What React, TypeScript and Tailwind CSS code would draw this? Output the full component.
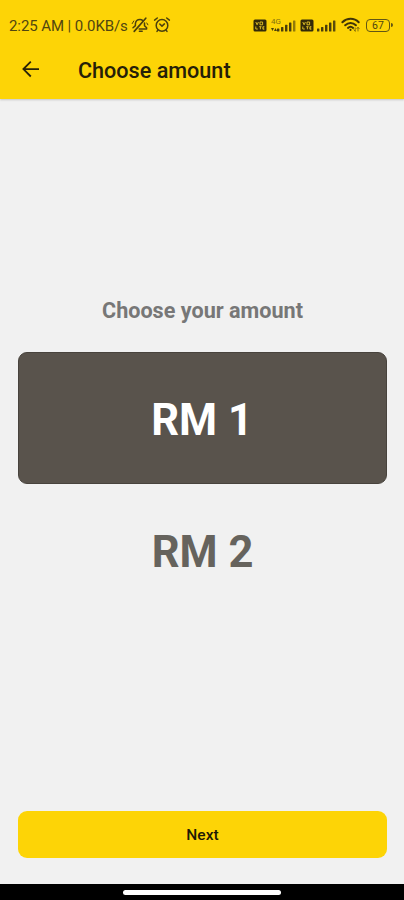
function BellOff() {
  return (
    <svg className="h-[18px] w-[18px] shrink-0" viewBox="0 0 18 18" fill="none" stroke="#4b400d" strokeWidth="1.5" strokeLinecap="round" strokeLinejoin="round">
      <path d="M2 11.8L4.4 9.6V7.6C4.7 4.9 6.8 3.5 9 3.5C10 3.5 10.9 3.8 11.6 4.3M13.5 7V9.8L15.6 11.8V13H8.2M8.4 15.2H11.2" />
      <path d="M14.8 2.2L3.2 15.4" strokeWidth="1.7" />
      <path d="M1.2 7.6L2.8 5M15.8 7L16.9 8.8" strokeWidth="1" />
    </svg>
  );
}

function AlarmClock() {
  return (
    <svg className="h-[18px] w-[18px] shrink-0" viewBox="0 0 18 18" fill="none" stroke="#4b400d" strokeWidth="1.5" strokeLinecap="round" strokeLinejoin="round">
      <circle cx="9" cy="9.4" r="5.8" />
      <path d="M6.8 8L9 10.1L11.4 7.9M1.6 4.1L4.3 2M16.4 4.1L13.7 2M5 14L4 15.4M13 14L14 15.4" />
    </svg>
  );
}

function VolteBadge() {
  return (
    <svg className="h-[13px] w-[14px] shrink-0" viewBox="0 0 14 13" fill="none">
      <rect x="0.5" y="0.5" width="13" height="12" rx="1.5" fill="#332a08" />
      <path d="M2.8 3L4.1 5.8L5.4 3M7 3H9.6V5.8H7ZM2.8 7.5V10H4.8M6.2 7.7H8.6M7.4 7.7V10.3M11.4 7.7H9.9V10.2H11.4M9.9 9H11.2" stroke="#e6c628" strokeWidth="0.9" />
    </svg>
  );
}

function SignalBars({ fade }: { fade?: boolean }) {
  return (
    <svg className="h-[12px] w-[19px] shrink-0" viewBox="0 0 19 12" fill="#4a3e0c">
      <rect x="0" y="8.5" width="2.4" height="3" rx="0.5" />
      <rect x="4" y="7" width="2.4" height="4.5" rx="0.5" />
      <rect x="8" y="4.8" width="2.4" height="6.7" rx="0.5" />
      <rect x="12" y="2.5" width="2.4" height="9" rx="0.5" />
      <rect x="16" y="0.5" width="2.4" height="11" rx="0.5" opacity={fade ? 0.6 : 0.9} />
    </svg>
  );
}

function Wifi() {
  return (
    <svg className="h-[16px] w-[20px] shrink-0" viewBox="0 0 20 16" fill="none" stroke="#403508" strokeWidth="2" strokeLinecap="round">
      <path d="M1.4 5.3C6 0.7 13.2 0.7 17.7 5.3M4.2 8.2C7.3 5.2 11.9 5.2 14.9 8.2M7 10.9C8.5 9.5 10.6 9.5 12.1 10.9" />
      <path d="M9.5 12.8V13.1" />
      <path d="M14.2 10.9V14M13 12.8L14.2 14.1M17 14V10.5M15.8 11.6L17 10.4L18.2 11.6" strokeWidth="0.8" opacity="0.75" />
    </svg>
  );
}

function StatusBar() {
  return (
    <div className="flex h-[50px] items-center pl-[9px] text-[#514610]">
      <span className="w-[122px] whitespace-nowrap pt-[2px] text-[15px] leading-none tracking-[-0.08px]">2:25 AM | 0.0KB/s</span>
      <BellOff />
      <div className="ml-[4px] flex"><AlarmClock /></div>
      <div className="ml-[82px] flex items-center">
        <VolteBadge />
        <div className="ml-[4px] flex h-[13px] w-[6px] flex-col justify-between">
          <span className="-mt-px whitespace-nowrap text-[8px] leading-[7px] opacity-70">4G</span>
          <svg className="h-[4px] w-[6px]" viewBox="0 0 6 4" fill="#4a3e0c"><path d="M0 0H3L1.5 3ZM3 3H6L4.5 0Z" /></svg>
        </div>
        <div className="flex pt-px"><SignalBars fade /></div>
        <div className="ml-[4px] flex"><VolteBadge /></div>
        <div className="ml-[3px] flex pt-px"><SignalBars /></div>
        <div className="ml-[5px] flex"><Wifi /></div>
        <div className="ml-[5px] flex items-center">
          <div className="flex h-[13px] w-[24px] items-center justify-center rounded-[4px] border border-[#625615] pt-[2px] text-[10.5px] leading-none">67</div>
          <div className="ml-px h-[4px] w-[2px] rounded-r-full bg-[#625615]" />
        </div>
      </div>
    </div>
  );
}

export default function App() {
  return (
    <div className="flex h-[900px] w-[404px] flex-col overflow-hidden bg-[#f1f1f1] font-['Roboto','Liberation_Sans',sans-serif]">
      <header className="h-[99px] shrink-0 bg-[#fdd406] shadow-[0_1px_2px_rgba(0,0,0,0.18)]">
        <StatusBar />
        <div className="flex h-[39px] items-center">
          <button aria-label="Back" className="mb-px ml-[22px] flex">
            <svg className="h-[18px] w-[18px]" viewBox="0 0 18 18" fill="none" stroke="#292207" strokeWidth="1.8">
              <path d="M17 9.1H2M8.8 1.7L1.4 9.1L8.8 16.5" />
            </svg>
          </button>
          <h1 className="ml-[38px] whitespace-nowrap pt-[2px] text-[21.6px] font-medium leading-none text-[#252008]">Choose amount</h1>
        </div>
      </header>
      <main className="flex flex-1 flex-col pl-[18px] pr-[17px]">
        <h2 className="mt-[200px] text-center text-[21.6px] font-bold leading-6 text-[#777777]">Choose your amount</h2>
        <button className="mt-[29px] h-[132px] rounded-[9px] border border-[#48433d] bg-[#59534c] pr-px pt-[6px] text-[43.5px] font-bold text-white">RM 1</button>
        <button className="h-[132px] pt-[6px] text-[43.5px] font-bold text-[#66635d]">RM 2</button>
        <button className="mb-[26px] mt-auto h-[47px] rounded-[9px] bg-[#fdd406] pt-[2px] text-[15.5px] font-medium text-[#1d1905]">Next</button>
      </main>
      <footer className="flex h-[16px] shrink-0 items-center justify-center bg-black">
        <div className="h-[5px] w-[158px] rounded-full bg-white" />
      </footer>
    </div>
  );
}
